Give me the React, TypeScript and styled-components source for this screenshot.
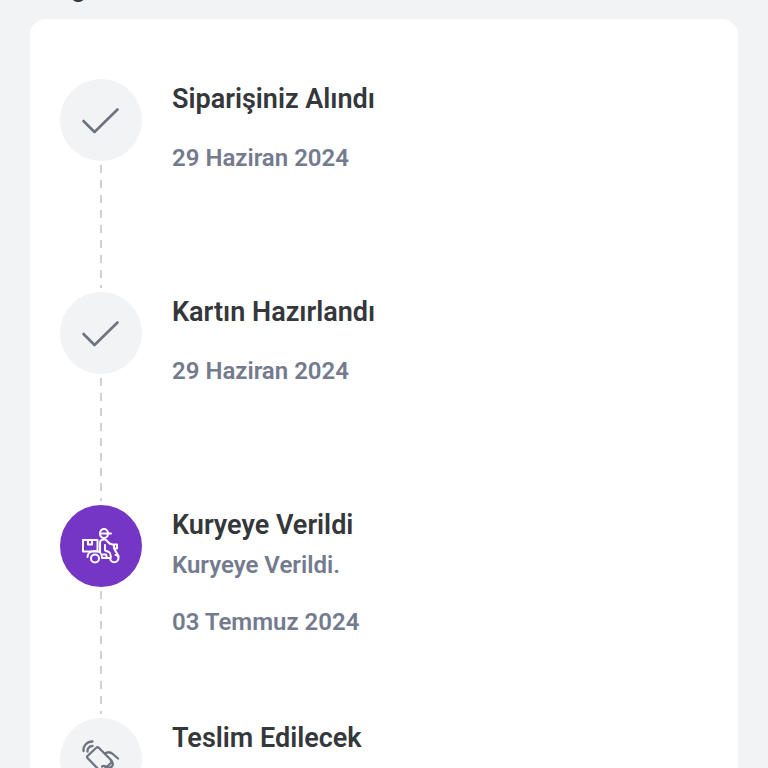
import React from "react";
import styled, { createGlobalStyle } from "styled-components";

const GlobalStyle = createGlobalStyle`
  * { box-sizing: border-box; }
  body {
    margin: 0;
    background: #f1f3f5;
    color: #34373b;
    font-family: Roboto, "Liberation Sans", sans-serif;
  }
  html { overflow: hidden; }
`;

const Screen = styled.main`
  height: 100vh;
  overflow: hidden;
  padding: 0 30px;
`;

const HeadingClip = styled.header`
  display: flex;
  align-items: flex-end;
  height: 19px;
  padding-bottom: 16px;
  overflow: hidden;
`;

const Heading = styled.h1`
  margin: 0;
  font-size: 27px;
  line-height: 32px;
  font-weight: 600;
`;

const Card = styled.section`
  background: #fff;
  border-radius: 16px;
  padding: 60px 30px;
`;

const Steps = styled.ol`
  list-style: none;
  margin: 0;
  padding: 0;
`;

const Step = styled.li`
  display: flex;
  gap: 30px;
  min-height: 213px;
`;

const Rail = styled.div`
  display: flex;
  flex-direction: column;
  align-items: center;
  width: 82px;
`;

const Badge = styled.div<{ $active?: boolean }>`
  display: grid;
  place-items: center;
  flex: none;
  width: 82px;
  height: 82px;
  border-radius: 50%;
  background: ${(p) => (p.$active ? "#7536c6" : "#f1f3f5")};
  color: ${(p) => (p.$active ? "#fff" : "#6e747f")};
`;

const Connector = styled.div`
  flex: 1;
  width: 2px;
  margin: 4px 0;
  background: repeating-linear-gradient(#cfd0d3 0 8px, transparent 8px 15px);
`;

const Content = styled.div`
  flex: 1;
  min-width: 0;
`;

const Title = styled.h2`
  margin: 4px 0 0;
  font-size: 27px;
  line-height: 32px;
  font-weight: 600;
`;

const Note = styled.p`
  margin: 10px 0 0;
  font-size: 24px;
  line-height: 28px;
  font-weight: 600;
  color: #747b8e;
`;

const StepDate = styled.time`
  display: block;
  margin-top: 29px;
  font-size: 24px;
  line-height: 28px;
  font-weight: 600;
  color: #747b8e;
`;

const Icon = styled.svg`
  display: block;
  width: 48px;
  height: 48px;
  fill: none;
  stroke: currentColor;
  stroke-width: 2;
  stroke-linecap: round;
  stroke-linejoin: round;
`;

const CheckIcon = () => (
  <Icon viewBox="0 0 48 48" aria-hidden="true">
    <path d="M6.500 25 17.500 36 40.500 13.500" strokeWidth="2.6" />
  </Icon>
);

const CourierIcon = () => (
  <Icon viewBox="0 0 48 48" aria-hidden="true">
    <path d="M6 18h14.500v11.500H6zM11 18v4.500h4V18" />
    <path d="M23 11.500c0-6 8-6 8 0s-8 6-8 0zM23 11.500h11" />
    <path d="M23 29.500V21c0-2.500 1.500-3.500 3.500-3.500h2l4 4 4.500 1.500" />
    <path d="M28 23v5.500l4 1.500c1.500 1 1.800 4 1.800 6h-3.800l-1-3.500h-3" />
    <path d="M37 22.500h3v4h-3zM37 26.500l4.500 7.500M10.500 35c0-8 14.500-8 14.500 0v1h5" />
    <path d="M14 36.500a4 4 0 1 0 8 0 4 4 0 1 0-8 0M33 36c0 5.500 8.500 5.500 8.500 0 0-2-1-3-3-3" />
  </Icon>
);

const HandoverIcon = () => (
  <Icon viewBox="0 0 48 48" aria-hidden="true">
    <g strokeWidth="2.300">
      <path d="M6.500 16c-.5-5.500 3.500-9.500 9-9.500M10.500 16.500c-.3-3 2-5.500 5-5.500" />
      <path d="M10.500 21 19 13c1-1 2-1 3 0l12 12c1 1 1 2 0 3L24 37 10.500 23c-.7-.7-.7-1.300 0-2z" />
      <path d="M28 18.500c3.500-2.500 7-.5 9 1.500l4 3.500M34 26c3 2 2 6-1 6.500s-5-3-8-1" />
    </g>
  </Icon>
);

interface Stage {
  title: string;
  note?: string;
  date?: string;
  icon: React.ReactNode;
  active?: boolean;
}

const stages: Stage[] = [
  { title: "Siparişiniz Alındı", date: "29 Haziran 2024", icon: <CheckIcon /> },
  { title: "Kartın Hazırlandı", date: "29 Haziran 2024", icon: <CheckIcon /> },
  {
    title: "Kuryeye Verildi",
    note: "Kuryeye Verildi.",
    date: "03 Temmuz 2024",
    icon: <CourierIcon />,
    active: true,
  },
  { title: "Teslim Edilecek", icon: <HandoverIcon /> },
];

export default function App() {
  return (
    <>
      <GlobalStyle />
      <Screen>
        <HeadingClip>
          <Heading>Kargo Durumu</Heading>
        </HeadingClip>
        <Card>
          <Steps>
            {stages.map((stage, i) => (
              <Step key={stage.title}>
                <Rail>
                  <Badge $active={stage.active}>{stage.icon}</Badge>
                  {i < stages.length - 1 && <Connector />}
                </Rail>
                <Content>
                  <Title>{stage.title}</Title>
                  {stage.note && <Note>{stage.note}</Note>}
                  {stage.date && <StepDate>{stage.date}</StepDate>}
                </Content>
              </Step>
            ))}
          </Steps>
        </Card>
      </Screen>
    </>
  );
}
